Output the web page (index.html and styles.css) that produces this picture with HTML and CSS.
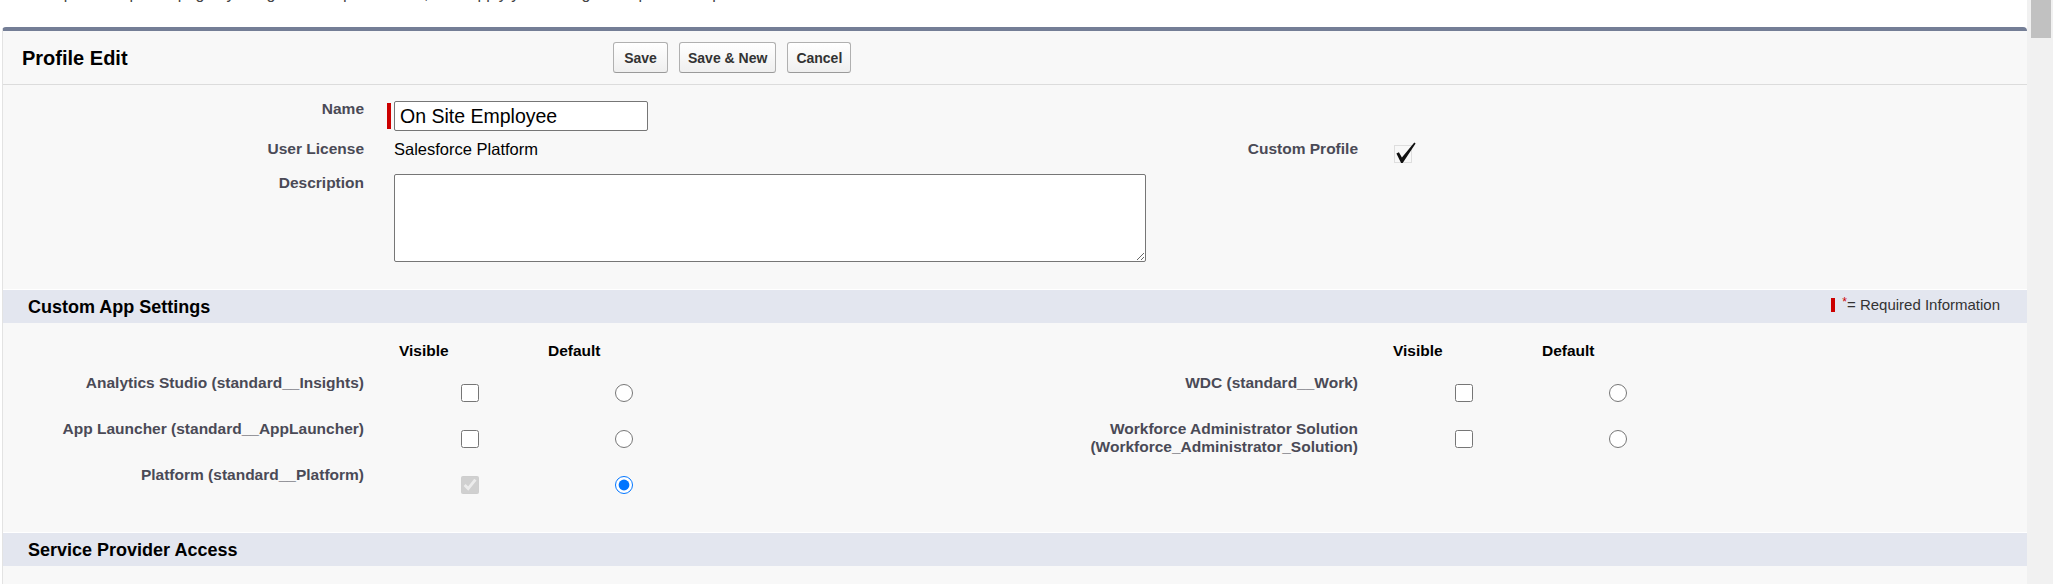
FILE: index.html
```html
<!DOCTYPE html>
<html lang="en">
<head>
<meta charset="utf-8">
<title>Profile Edit</title>
<link rel="stylesheet" href="styles.css">
</head>
<body>
<div class="page">
  <main class="main">
    <div class="intro"><p class="intro-text">Complete the profile page by filling in the required fields, then apply your changes to update this profile.</p></div>
    <section class="panel">
      <div class="panel-head">
        <h2 class="title">Profile Edit</h2>
        <div class="buttons">
          <button class="btn" type="button">Save</button>
          <button class="btn" type="button">Save &amp; New</button>
          <button class="btn" type="button">Cancel</button>
        </div>
      </div>

      <div class="detail">
        <div class="lbl">Name</div>
        <div class="data">
          <div class="req"><span class="req-bar"></span><input class="text-in" type="text" value="On Site Employee"></div>
        </div>
        <div class="lbl"></div>
        <div class="data"></div>

        <div class="lbl">User License</div>
        <div class="data value">Salesforce Platform</div>
        <div class="lbl">Custom Profile</div>
        <div class="data">
          <svg class="checkimg" width="24" height="24" viewBox="0 0 24 24" aria-label="Checked">
            <rect x="1.5" y="4.5" width="17" height="17" fill="none" stroke="#c4c4c4" stroke-width="1" stroke-dasharray="1 1"/>
            <path d="M3.4 12.6 L5.9 11.2 L8.9 16.6 L21.3 1.6 L22.6 2.6 L9.7 21.9 L8.1 21.9 Z" fill="#111"/>
          </svg>
        </div>

        <div class="lbl">Description</div>
        <div class="data span2"><textarea class="desc"></textarea></div>
      </div>

      <div class="subhead">
        <h3 class="subhead-title">Custom App Settings</h3>
        <div class="req-info"><span class="req-mark"></span><span class="star">*</span>= Required Information</div>
      </div>

      <div class="apps">
        <div></div>
        <div class="col-h vis">Visible</div>
        <div class="col-h def">Default</div>
        <div></div>
        <div class="col-h vis">Visible</div>
        <div class="col-h def">Default</div>

        <div class="app-lbl">Analytics Studio (standard__Insights)</div>
        <div class="ctl"><input class="cb" type="checkbox"></div>
        <div class="ctl"><input class="rb" type="radio" name="defl"></div>
        <div class="app-lbl">WDC (standard__Work)</div>
        <div class="ctl"><input class="cb" type="checkbox"></div>
        <div class="ctl"><input class="rb" type="radio" name="defr"></div>

        <div class="app-lbl">App Launcher (standard__AppLauncher)</div>
        <div class="ctl"><input class="cb" type="checkbox"></div>
        <div class="ctl"><input class="rb" type="radio" name="defl"></div>
        <div class="app-lbl">Workforce Administrator Solution<br>(Workforce_Administrator_Solution)</div>
        <div class="ctl"><input class="cb" type="checkbox"></div>
        <div class="ctl"><input class="rb" type="radio" name="defr"></div>

        <div class="app-lbl">Platform (standard__Platform)</div>
        <div class="ctl"><input class="cb" type="checkbox" checked disabled></div>
        <div class="ctl"><input class="rb" type="radio" name="defl" checked></div>
        <div></div>
        <div></div>
        <div></div>
      </div>

      <div class="subhead">
        <h3 class="subhead-title">Service Provider Access</h3>
      </div>
      <div class="tail"></div>
    </section>
  </main>
  <div class="scrollbar"><div class="thumb"></div></div>
</div>
</body>
</html>
```
FILE: styles.css
```css
html, body {
  margin: 0;
  padding: 0;
  background: #fff;
  overflow: hidden;
}

body {
  font-family: "Liberation Sans", Arial, sans-serif;
  color: #000;
}

.page {
  display: flex;
  height: 584px;
}

.main {
  flex: 1;
  min-width: 0;
  display: flex;
  flex-direction: column;
  overflow: hidden;
}

.intro {
  height: 27px;
  overflow: hidden;
  flex: none;
}

.intro-text {
  margin: -14px 0 0 30px;
  font-size: 16px;
  line-height: 16px;
  color: #444;
  white-space: nowrap;
}

.panel {
  flex: 1;
  margin-left: 2px;
  background: #f8f8f8;
  border-top: 4px solid #747e96;
  border-left: 1px solid #e3e3e3;
  border-radius: 4px 4px 0 0;
}

.panel-head {
  height: 53px;
  border-bottom: 1px solid #dcdcdc;
  display: grid;
  grid-template-columns: 610px 1fr;
  align-items: center;
}

.title {
  margin: 0;
  padding-left: 19px;
  font-size: 20px;
  line-height: 24px;
  font-weight: bold;
  color: #000;
}

.buttons {
  display: flex;
  gap: 11px;
}

.btn {
  box-sizing: border-box;
  height: 31px;
  min-width: 55px;
  padding: 0 8px;
  font-family: "Liberation Sans", Arial, sans-serif;
  font-size: 14px;
  font-weight: bold;
  color: #333;
  background: linear-gradient(#ffffff, #efefef);
  border: 1px solid #b0b0b0;
  border-bottom-color: #9a9a9a;
  border-radius: 3px;
}

.detail {
  display: grid;
  grid-template-columns: 373px 621px 373px 1fr;
  grid-template-rows: 40px 34px 88px;
  align-items: start;
  padding: 15px 0 27px;
}

.lbl {
  text-align: right;
  padding-right: 12px;
  font-size: 15.5px;
  line-height: 18px;
  font-weight: bold;
  color: #4a4a56;
}

.data {
  padding-left: 18px;
}

.value {
  font-size: 16.5px;
  line-height: 18px;
  color: #000;
}

.span2 {
  grid-column: 2 / 4;
}

.req {
  display: flex;
  align-items: center;
  gap: 3px;
  margin-left: -7px;
  margin-top: 1px;
}

.req-bar {
  display: block;
  width: 4px;
  height: 26px;
  background: #c00;
}

.text-in {
  box-sizing: border-box;
  width: 254px;
  height: 30px;
  margin: 0;
  padding: 0 5px;
  font-family: "Liberation Sans", Arial, sans-serif;
  font-size: 19.5px;
  color: #000;
  background: #fff;
  border: 1px solid #767676;
  border-radius: 2px;
}

.checkimg {
  display: block;
  margin: 1px 0 0 5px;
}

.desc {
  display: block;
  box-sizing: border-box;
  width: 752px;
  height: 88px;
  margin: 0;
  background: #fff;
  border: 1px solid #767676;
  border-radius: 2px;
  resize: both;
}

.subhead {
  height: 33px;
  border-top: 1px solid #fff;
  background: #e3e6ef;
  display: flex;
  align-items: center;
  justify-content: space-between;
  padding: 0 27px 0 25px;
}

.subhead-title {
  margin: 0;
  font-size: 18px;
  line-height: 20px;
  font-weight: bold;
  color: #000;
}

.req-info {
  display: flex;
  align-items: flex-start;
  font-size: 15px;
  line-height: 18px;
  color: #333;
  margin-top: -4px;
}

.req-mark {
  display: block;
  width: 4px;
  height: 14px;
  margin: 2px 7px 0 -3px;
  background: #c00;
}

.star {
  color: #c00;
  font-size: 12px;
  line-height: 12px;
}

.apps {
  display: grid;
  grid-template-columns: 373px 154px 467px 373px 154px 1fr;
  grid-template-rows: 32px 46px 46px 46px;
  align-items: start;
  padding: 19px 0 20px;
}

.col-h {
  font-size: 15.5px;
  line-height: 18px;
  font-weight: bold;
  color: #000;
}

.vis {
  padding-left: 23px;
}

.def {
  padding-left: 18px;
}

.app-lbl {
  text-align: right;
  padding-right: 12px;
  font-size: 15.5px;
  line-height: 18px;
  font-weight: bold;
  color: #4a4a56;
}

.ctl {
  padding: 10px 0 0 85px;
}

.cb,
.rb {
  display: block;
  width: 18px;
  height: 18px;
  margin: 0;
}

.tail {
  height: 20px;
}

.scrollbar {
  flex: none;
  width: 26px;
  height: 584px;
  background: #f1f1f1;
}

.thumb {
  width: 20px;
  height: 38px;
  margin-left: 4px;
  background: #c1c1c1;
}
```
